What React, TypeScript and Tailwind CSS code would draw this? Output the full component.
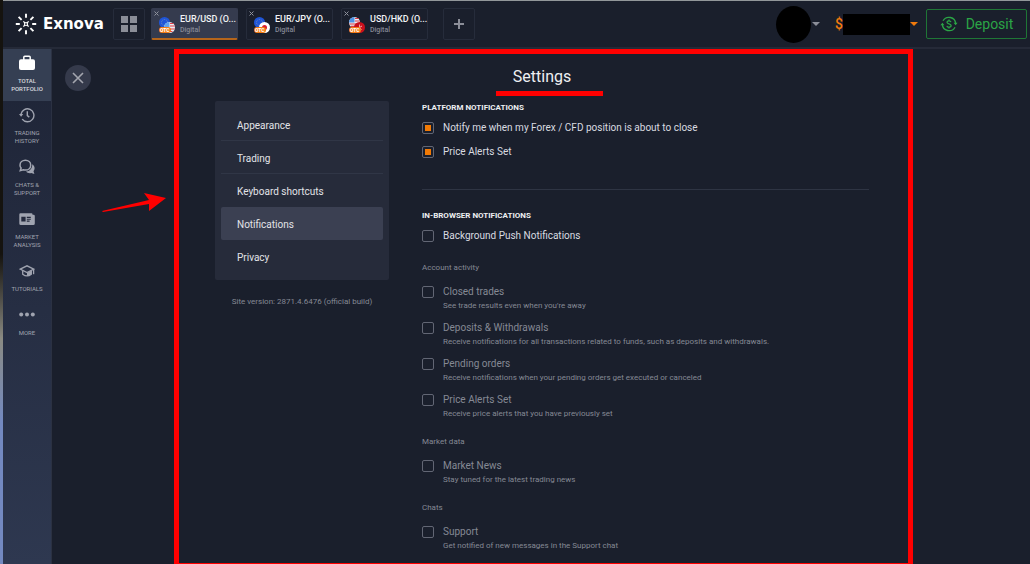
import { useState } from 'react'
import type { ReactNode } from 'react'

function Logo() {
  return (
    <svg viewBox="0 0 22 22" className="size-[22px] shrink-0" fill="none" stroke="#fff" strokeWidth="1.9">
      <path d="M11 0.8v4M11 17.2v4M0.8 11h4M17.2 11h4" />
      <path d="M3.6 3.8l3 3M18.4 3.8l-3 3M3.6 18.2l3-3M18.4 18.2l-3-3" />
      <path d="M8.4 8.4c1.6 1.8 3.6 1.8 5.2 0M8.4 13.6c1.6-1.8 3.6-1.8 5.2 0M8.4 8.4c1.8 1.6 1.8 3.6 0 5.2M13.6 8.4c-1.8 1.6-1.8 3.6 0 5.2" strokeWidth="1.1" />
    </svg>
  )
}

function PortfolioIcon() {
  return (
    <svg viewBox="0 0 16 16" className="size-4" fill="none">
      <path d="M4.8 5V2.2q0-1 1-1h4.4q1 0 1 1V5" stroke="#fff" strokeWidth="1.5" />
      <rect x="0" y="4.3" width="16" height="10.7" rx="2" fill="#fff" />
    </svg>
  )
}

function HistoryIcon() {
  return (
    <svg viewBox="0 0 16 16" className="size-4" fill="none" stroke="currentColor" strokeWidth="1.4">
      <path d="M2 7.2A6.5 6.5 0 1 1 3.2 12.2" />
      <path d="M8.300 4.300V8.600l2 1.500" />
      <path d="M0 7h4.200L2.100 9.800z" fill="currentColor" stroke="none" />
    </svg>
  )
}

function ChatsIcon() {
  return (
    <svg viewBox="0 0 16 16" className="size-4" fill="none">
      <path d="M6.400 1.300c3 0 5.300 2 5.300 4.900s-2.300 4.900-5.300 4.900c-.8 0-1.500-.1-2.200-.4L1.300 11.600l.8-2.500C1.400 8.300 1 7.300 1 6.200 1 3.300 3.400 1.300 6.400 1.300z" stroke="currentColor" strokeWidth="1.5" />
      <path d="M13.200 5.300c1.500.9 2.400 2.300 2.400 4 0 1.100-.4 2.100-1.100 2.900l.9 2.900-3.200-1c-2 .5-4-.1-5.200-1.500 3.900-.2 6.500-3.200 6.200-7.300z" fill="currentColor" />
    </svg>
  )
}

function NewsIcon() {
  return (
    <svg viewBox="0 0 16 16" className="size-4" fill="none">
      <path d="M1.500 2.200h11q1 0 1 1v.6h1q1.300 0 1.300 1.200v7.500q0 1.500-1.500 1.500H1.900Q.300 14 .300 12.500V3.400q0-1.200 1.200-1.200z" fill="currentColor" />
      <path d="M2.300 5.800h4.300v4.800H2.300zM7.800 5.800h4v1.100h-4zM7.800 7.700h4v1.100h-4zM7.800 9.600h2.800v1.100H7.800z" fill="#242a3d" />
    </svg>
  )
}

function TutorialsIcon() {
  return (
    <svg viewBox="0 0 16 16" className="size-4" fill="none" stroke="currentColor" strokeWidth="1.3">
      <path d="M1.200 6.200L8 2.800l6.800 3.400L8 9.600z" />
      <path d="M3.700 7.800v3.400q4.300 3.400 8.600 0V7.800" />
      <path d="M8 9.800l4.300-2v3.400q-1.800 1.600-4.300 1.700z" fill="currentColor" stroke="none" />
      <path d="M14.600 6.500v4.700" />
    </svg>
  )
}

function MoreIcon() {
  return (
    <svg viewBox="0 0 16 16" className="size-4" fill="currentColor">
      <circle cx="2.200" cy="7.500" r="2" />
      <circle cx="8" cy="7.500" r="2" />
      <circle cx="13.800" cy="7.500" r="2" />
    </svg>
  )
}

function DepositIcon() {
  return (
    <svg viewBox="0 0 18 18" className="size-[18px]" fill="none" stroke="currentColor" strokeWidth="1.3">
      <path d="M3 5.800A6.800 6.800 0 0 1 15.700 8.600M15 12.200A6.800 6.800 0 0 1 2.300 9.400" />
      <path d="M13.600 7.700h4l-2 2.500zM.400 10.200h4l-2-2.500z" fill="currentColor" stroke="none" />
      <path d="M11 7.100c-.3-.9-1-1.300-2-1.300-1.200 0-2 .6-2 1.500 0 2.200 4.100 1 4.100 3.300 0 1-.9 1.600-2.100 1.600-1.100 0-1.900-.5-2.100-1.400M9 4.500v1.300M9 12.200v1.300" />
    </svg>
  )
}

const flags: Record<string, ReactNode> = {
  eu: (
    <>
      <circle cx="5.500" cy="5.500" r="5.500" fill="#1f55d8" />
      <circle cx="5.500" cy="5.500" r="3" fill="none" stroke="#6d8ab8" strokeWidth="1" strokeDasharray="1 .9" />
    </>
  ),
  usTop: (
    <>
      <circle cx="5.500" cy="5.500" r="5.500" fill="#e9edf2" />
      <path d="M5.500 0A5.500 5.500 0 0 0 0 5.500h5.500z" fill="#4d93e6" />
      <path d="M6 1.500h3.600M6 4h4.600M.500 7h10M2 9.300h7" stroke="#dc3a45" strokeWidth="1.2" />
    </>
  ),
  us: (
    <>
      <circle cx="10.500" cy="10.500" r="5.500" fill="#eceef2" />
      <path d="M10.500 5A5.500 5.500 0 0 0 5 10.500h5.500z" fill="#5fa2ee" />
      <path d="M11 6.500h3.400M11 9h4.700M6 12h9.600M7.500 14.500h6" stroke="#e03c48" strokeWidth="1.2" />
    </>
  ),
  jp: (
    <>
      <circle cx="10.500" cy="10.500" r="5.500" fill="#fff" />
      <circle cx="10.500" cy="10.500" r="2.500" fill="#d81f30" />
    </>
  ),
  hk: (
    <>
      <circle cx="10.500" cy="10.500" r="5.500" fill="#c9101c" />
      <path d="M10.500 7.500v3l2.500-1.500M10.500 10.500l2 2.200" stroke="#f3b9bc" strokeWidth="0.9" />
    </>
  ),
}

function PairIcon({ base, quote }: { base: string; quote: string }) {
  return (
    <span className="relative block size-4 shrink-0">
      <svg viewBox="0 0 16 16" className="size-4" fill="none">
        {flags[base]}
        {flags[quote]}
      </svg>
      <span className="absolute bottom-0 left-0 rounded-full bg-[#f57c14] px-px text-[5px] leading-[6px] font-black text-white">OTC</span>
    </span>
  )
}

const tabs = [
  { name: 'EUR/USD (O...', base: 'eu', quote: 'us' },
  { name: 'EUR/JPY (O...', base: 'eu', quote: 'jp' },
  { name: 'USD/HKD (O...', base: 'usTop', quote: 'hk' },
]

const sideItems = [
  { label: 'TOTAL PORTFOLIO', Icon: PortfolioIcon },
  { label: 'TRADING HISTORY', Icon: HistoryIcon },
  { label: 'CHATS & SUPPORT', Icon: ChatsIcon },
  { label: 'MARKET ANALYSIS', Icon: NewsIcon },
  { label: 'TUTORIALS', Icon: TutorialsIcon },
  { label: 'MORE', Icon: MoreIcon },
]

const menu = ['Appearance', 'Trading', 'Keyboard shortcuts', 'Notifications', 'Privacy']

const accountActivity = [
  { label: 'Closed trades', hint: "See trade results even when you're away" },
  { label: 'Deposits & Withdrawals', hint: 'Receive notifications for all transactions related to funds, such as deposits and withdrawals.' },
  { label: 'Pending orders', hint: 'Receive notifications when your pending orders get executed or canceled' },
  { label: 'Price Alerts Set', hint: 'Receive price alerts that you have previously set' },
]

function Caret({ className }: { className: string }) {
  return (
    <svg viewBox="0 0 8 4" className={`h-1 w-2 shrink-0 ${className}`} fill="currentColor">
      <path d="M0 0h8L4 4z" />
    </svg>
  )
}

function Header() {
  const [active, setActive] = useState(0)

  return (
    <header className="flex h-12 shrink-0 items-center border-b-2 border-[#252a38] pr-[3px] pl-3">
      <a href="#" className="flex w-[98px] shrink-0 items-center gap-[6px]">
        <Logo />
        <span className="font-['DejaVu_Sans',sans-serif] text-[15px] font-bold text-white">Exnova</span>
      </a>
      <button aria-label="Layouts" className="grid size-8 shrink-0 grid-cols-[7px_7px] place-content-center gap-[2px] rounded-xs border border-[#262c3b]">
        <span className="size-[7px] bg-[#8b8e98]" />
        <span className="size-[7px] bg-[#8b8e98]" />
        <span className="size-[7px] bg-[#8b8e98]" />
        <span className="size-[7px] bg-[#8b8e98]" />
      </button>
      <nav className="ml-[6px] flex gap-2">
        {tabs.map((t, i) => (
          <div
            key={t.name}
            className={`relative h-8 w-[87px] rounded-xs border ${i === active ? 'border-[#353b4e] border-b-2 border-b-[#b5651b] bg-[#353b4e]' : 'border-[#262c3b]'}`}
          >
            <button onClick={() => setActive(i)} className="flex h-full w-full items-center gap-[5px] pt-[2px] pl-[7px] text-left">
              <PairIcon base={t.base} quote={t.quote} />
              <span>
                <span className="block text-[9px] leading-[11px] font-medium whitespace-nowrap text-[#f2f3f5]">{t.name}</span>
                <span className="block text-[7px] leading-[11px] font-medium text-[#858995]">Digital</span>
              </span>
            </button>
            <button aria-label="Close tab" className="absolute top-[2px] left-[2px] text-[#8f929c]">
              <svg viewBox="0 0 5 5" className="size-[5px]" stroke="currentColor" strokeWidth="1">
                <path d="M.500.500l4 4M4.500.500l-4 4" />
              </svg>
            </button>
          </div>
        ))}
      </nav>
      <button aria-label="Add asset" className="ml-[15px] grid size-8 shrink-0 place-items-center rounded-xs border border-[#262c3b] text-[#8b8e98]">
        <svg viewBox="0 0 10 10" className="size-[10px]" stroke="currentColor" strokeWidth="2">
          <path d="M5 0v10M0 5h10" />
        </svg>
      </button>

      <div className="ml-auto flex shrink-0 items-center">
        <button aria-label="Account" className="flex items-center gap-px">
          <span className="block h-[37px] w-[35px] rounded-[50%] bg-black" />
          <Caret className="text-[#8b8e98]" />
        </button>
        <button aria-label="Balance" className="ml-[15px] flex items-center">
          <span className="w-2 text-sm font-medium text-[#f07a0c]">$</span>
          <span className="block h-[21px] w-[67px] bg-black" />
          <Caret className="text-[#f07a0c]" />
        </button>
        <button className="ml-2 flex h-[30px] w-[101px] items-center justify-center gap-2 rounded-xs border border-[#1f7636] text-sm text-[#2ba546]">
          <DepositIcon />
          Deposit
        </button>
      </div>
    </header>
  )
}

function Sidebar() {
  return (
    <aside className="w-[49px] shrink-0 border-r border-[#2b3142] bg-linear-to-b from-[#1e2436] to-[#2e3850]">
      {sideItems.map(({ label, Icon }, i) => (
        <button
          key={label}
          className={`flex w-full flex-col items-center gap-[6px] px-1 pt-[6px] pb-2 text-[6px] leading-[8px] ${i === 0 ? 'bg-[#353f53] font-medium text-[#d5d8de]' : 'text-[#a0a4b0]'}`}
        >
          <Icon />
          {label}
        </button>
      ))}
    </aside>
  )
}

type CheckProps = { label: string; hint?: string; checked?: boolean; muted?: boolean }

function Check({ label, hint, checked, muted }: CheckProps) {
  return (
    <label className="flex gap-[9px]">
      <input
        type="checkbox"
        defaultChecked={checked}
        className="grid size-3 shrink-0 appearance-none place-content-center rounded-xs border border-[#626674] before:size-[6px] checked:before:bg-[#f27a05]"
      />
      <span>
        <span className={`block text-[10px] leading-[12px] ${muted ? 'text-[#858994]' : 'text-[#d9dbe0]'}`}>{label}</span>
        {hint && <span className="mt-[2px] block text-[8px] leading-[12px] text-[#858994]">{hint}</span>}
      </span>
    </label>
  )
}

function Notifications() {
  return (
    <div className="min-w-0 flex-1 pt-px">
      <h2 className="mb-2 text-[8px] leading-[12px] font-bold text-[#eeeff2]">PLATFORM NOTIFICATIONS</h2>
      <div className="flex flex-col gap-3">
        <Check label="Notify me when my Forex / CFD position is about to close" checked />
        <Check label="Price Alerts Set" checked />
      </div>
      <hr className="mt-[31px] mb-5 border-[#2e3443]" />
      <h2 className="mb-2 text-[8px] leading-[12px] font-bold text-[#eeeff2]">IN-BROWSER NOTIFICATIONS</h2>
      <Check label="Background Push Notifications" />
      <h3 className="mt-5 mb-3 text-[8px] leading-[12px] text-[#858994]">Account activity</h3>
      <div className="flex flex-col gap-[10px]">
        {accountActivity.map((o) => (
          <Check key={o.label} label={o.label} hint={o.hint} muted />
        ))}
      </div>
      <h3 className="mt-4 mb-3 text-[8px] leading-[12px] text-[#858994]">Market data</h3>
      <Check label="Market News" hint="Stay tuned for the latest trading news" muted />
      <h3 className="mt-4 mb-3 text-[8px] leading-[12px] text-[#858994]">Chats</h3>
      <Check label="Support" hint="Get notified of new messages in the Support chat" muted />
    </div>
  )
}

function Settings() {
  const [page, setPage] = useState('Notifications')

  return (
    <section className="relative min-w-0 flex-1 border-[5px] border-b border-[#ff0000] pr-[39px] pb-[11px] pl-9">
      {/* pointer to the settings panel */}
      <svg viewBox="0 0 64 20" className="absolute top-[139px] -left-[77px] h-5 w-16" fill="#ff0000">
        <path d="M0 18L47 7 42 0l22 5-17 13 0-7L1 19z" />
      </svg>
      <h1 className="relative mx-auto mt-3 mb-[13px] w-fit text-base leading-[22px] text-[#eeeff2]">
        Settings
        <span className="absolute top-[25px] -left-[17px] h-[5px] w-[107px] bg-[#ff0000]" />
      </h1>
      <div className="flex items-start gap-[33px]">
        <div className="w-[174px] shrink-0">
          <nav className="rounded-xs bg-[#262b3a] px-[6px] py-[7px]">
            {menu.map((m, i) => (
              <button
                key={m}
                onClick={() => setPage(m)}
                className={`block h-[33px] w-full pt-[2px] pl-4 text-left text-[10px] text-[#e2e3e8] ${m === page ? 'rounded-xs bg-[#3b4052]' : ''} ${i < 2 ? 'border-b border-[#303646]' : ''}`}
              >
                {m}
              </button>
            ))}
          </nav>
          <p className="mt-4 text-center text-[8px] leading-[12px] text-[#858994]">Site version: 2871.4.6476 (official build)</p>
        </div>
        <Notifications />
      </div>
    </section>
  )
}

export default function App() {
  return (
    <div className="flex min-h-screen bg-[#1a1f2c] font-['Roboto',sans-serif]">
      <div className="w-[3px] shrink-0 bg-linear-to-b from-[#15130f] from-45% via-[#8a8a82] via-60% to-[#7389c0] to-75%" />
      <div className="flex min-w-0 flex-1 flex-col border-t border-[#92979a]">
        <Header />
        <div className="flex flex-1">
          <Sidebar />
          <main className="flex min-w-0 flex-1 pr-[117px] pl-[13px]">
            <div className="w-[109px] shrink-0 pt-4">
              <button aria-label="Close" className="grid size-[26px] place-items-center rounded-full bg-[#353a4b] text-[#a4a6af]">
                <svg viewBox="0 0 12 12" className="size-3" stroke="currentColor" strokeWidth="1.6">
                  <path d="M1 1l10 10M11 1L1 11" />
                </svg>
              </button>
            </div>
            <Settings />
          </main>
        </div>
      </div>
    </div>
  )
}
